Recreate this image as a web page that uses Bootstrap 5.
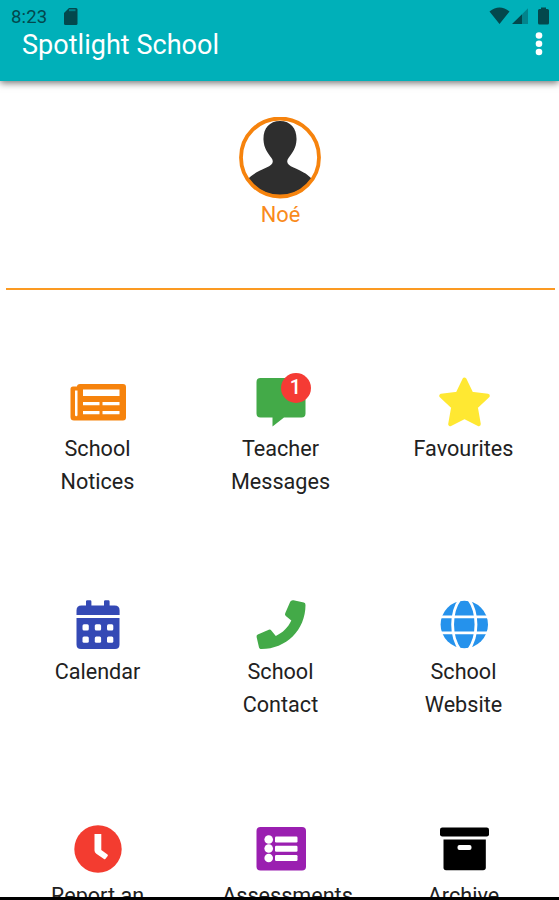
<!DOCTYPE html>
<html lang="en">
<head>
<meta charset="utf-8">
<meta name="viewport" content="width=device-width, initial-scale=1">
<title>Spotlight School</title>
<link href="https://cdn.jsdelivr.net/npm/bootstrap@5.3.0/dist/css/bootstrap.min.css" rel="stylesheet">
<style>
body{font-family:Roboto,"Liberation Sans",sans-serif;color:#212121;height:900px}
.screen{height:900px;border-bottom:3px solid #000}
.app-header{height:81px;background:#00b0b9;box-shadow:0 2px 7px rgba(0,0,0,.55);padding:7px 8px 0 11px;flex:none;z-index:1}
.status-line{height:20px;color:#03484d;font-size:18.5px;line-height:20px;letter-spacing:.2px}
.app-title{font-size:27px;line-height:36px;color:#fff;padding-left:11px;letter-spacing:.03px}
.profile{height:209px;margin:0 4px 0 6px;border-bottom:2px solid #fb9a22;padding-top:36px;flex:none}
.profile svg{margin-right:2px}
.profile-name{color:#f98a1c;font-size:21.8px;line-height:32px}
.tiles{margin:82px 5px 0;flex:none}
.tile{height:223.3px;font-size:21.6px;line-height:32.5px}
.tile svg{display:block;margin-bottom:1px}
.tile-label{padding-left:2px}
.tile-icon{width:60px}
.count-dot{left:31px;top:1px;width:30px;height:30px;background:#f53b34;font-size:20px;line-height:29px}
</style>
<script src="https://cdn.jsdelivr.net/npm/bootstrap@5.3.0/dist/js/bootstrap.bundle.min.js"></script>
</head>
<body class="bg-white overflow-hidden">
<div class="screen d-flex flex-column overflow-hidden">
  <header class="app-header">
    <div class="status-line d-flex justify-content-between">
      <div class="d-flex">
        <span>8:23</span>
        <svg class="ms-3" width="18" height="20" viewBox="0 0 18 20"><path fill="#03484d" d="M6 1h7q1.500 0 1.500 1.500v14q0 1.500-1.500 1.500H2.500q-1.500 0-1.500-1.500V6z"/><path stroke="#00828a" stroke-width="2" d="M6 3.200h6.500"/></svg>
      </div>
      <svg width="62" height="20" viewBox="489 7 62 20"><path fill="#03484d" d="M489.500 11.500q10-8 20 0L499.500 24zM512 24l10-9.800V24zM538 10.500q0-1.500 1.500-1.500h1.500V7.500h5V9h1.500q1.500 0 1.500 1.500V23q0 1.500-1.500 1.500h-8q-1.500 0-1.500-1.500z"/><path fill="#02848c" d="M522 14.200l6-6V24h-6z"/></svg>
    </div>
    <div class="d-flex justify-content-between">
      <h1 class="app-title fw-normal mb-0">Spotlight School</h1>
      <svg width="24" height="34" viewBox="527 27 24 34" fill="#fff"><circle cx="539" cy="35.500" r="3.300"/><circle cx="539" cy="43.800" r="3.300"/><circle cx="539" cy="52" r="3.300"/></svg>
    </div>
  </header>

  <section class="profile d-flex flex-column align-items-center">
    <svg width="82" height="82" viewBox="239 117 82 82"><defs><clipPath id="face"><circle cx="280" cy="157.500" r="38"/></clipPath></defs><path clip-path="url(#face)" fill="#2e2e2e" d="M280 121c11 0 17 8 16.500 19-.4 8-4 12.500-8 18-3 4.500-.5 7 5 9.500 8 3.500 13 6 17.500 10.500V200h-62v-22c4.500-4.500 9.500-7 17.500-10.500 5.500-2.500 8-5 5-9.500-4-5.500-7.600-10-8-18C263 129 269 121 280 121z"/><circle cx="280" cy="157.500" r="39" fill="none" stroke="#f6830d" stroke-width="3.800"/></svg>
    <div class="profile-name">Noé</div>
  </section>

  <main class="tiles row g-0 text-center">
    <div class="tile col-4 d-flex flex-column align-items-center">
      <svg width="60" height="60" viewBox="67 372 60 60"><path fill="#f6830d" d="M80 384h43q3 0 3 3v30.500q0 3-3 3H74q-3.500 0-3.500-3.500v-28q0-2.500 2.500-2.500h4q0-2.500 3-2.500z"/><path fill="#fff" d="M83 389.500h36.500v6.500H83zM83 402h16.500v3.300H83zM102.500 402h17v3.300h-17zM83 411h16.500v3.300H83zM102.500 411h17v3.300h-17zM75 390.500h2.500V415q0 1.200-1.200 1.200T75 415z"/></svg>
      <div class="tile-label">School<br>Notices</div>
    </div>
    <div class="tile col-4 d-flex flex-column align-items-center">
      <div class="tile-icon position-relative">
        <svg width="60" height="60" viewBox="250 372 60 60"><path fill="#43aa48" d="M260.500 378h41q4 0 4 4v31.500q0 4-4 4H284l-11.500 9v-9h-12q-4 0-4-4V382q0-4 4-4z"/></svg>
        <span class="count-dot position-absolute rounded-circle text-white fw-medium">1</span>
      </div>
      <div class="tile-label">Teacher<br>Messages</div>
    </div>
    <div class="tile col-4 d-flex flex-column align-items-center">
      <svg width="60" height="60" viewBox="433 372 60 60"><path fill="#ffe832" stroke="#ffe832" stroke-width="4" stroke-linejoin="round" d="M464.500 379.500l7 14.300 16.300 2-12 11.200 3 17.200-14.300-7.200-14.300 7.200 3-17.200-12-11.200 16.300-2z"/></svg>
      <div class="tile-label">Favourites</div>
    </div>

    <div class="tile col-4 d-flex flex-column align-items-center">
      <svg width="60" height="60" viewBox="67 595.500 60 60"><path fill="#3449b5" d="M86 606v-4q0-1.200 1.200-1.200h3q1.200 0 1.200 1.200v4H104v-4q0-1.200 1.200-1.200h3.200q1.200 0 1.200 1.200v4h5q5 0 5 5v4.500H76.500V611q0-5 5-5zM76.500 618.500h43V645q0 4.500-4.500 4.500H81q-4.500 0-4.500-4.500z"/><g fill="#fff"><rect x="82.500" y="624.700" width="6.300" height="6.300" rx="1.500"/><rect x="94.800" y="624.700" width="6.300" height="6.300" rx="1.500"/><rect x="107" y="624.700" width="6.300" height="6.300" rx="1.500"/><rect x="82.500" y="637" width="6.300" height="6.300" rx="1.500"/><rect x="94.800" y="637" width="6.300" height="6.300" rx="1.500"/><rect x="107" y="637" width="6.300" height="6.300" rx="1.500"/></g></svg>
      <div class="tile-label">Calendar</div>
    </div>
    <div class="tile col-4 d-flex flex-column align-items-center">
      <svg width="60" height="60" viewBox="250 595.500 60 60"><path fill="#43aa48" d="M293.500 600.700l10.300 2.400q1.700.4 1.700 2.300c0 25-19.500 44-44 44-1.700 0-2.200-.5-2.600-2l-2.300-10q-.4-1.800 1.200-2.500l11-4.600q1.500-.6 2.500.7l4.500 5.400c7.300-3.500 12.200-8.500 15.500-15.500l-5.500-4.500q-1.300-1-.6-2.600l5-11.500q.9-2 3.300-1.600z"/></svg>
      <div class="tile-label">School<br>Contact</div>
    </div>
    <div class="tile col-4 d-flex flex-column align-items-center">
      <svg width="60" height="60" viewBox="433 595.500 60 60"><circle cx="464.300" cy="625" r="23.700" fill="#2592ec"/><path fill="none" stroke="#fff" stroke-width="2.800" d="M439 617.300h51M439 633.300h51M460.500 599c-10.500 14-10.500 38 0 52M468.100 599c10.500 14 10.500 38 0 52"/></svg>
      <div class="tile-label">School<br>Website</div>
    </div>

    <div class="tile col-4 d-flex flex-column align-items-center">
      <svg width="60" height="60" viewBox="67 818.500 60 60"><circle cx="98" cy="848.500" r="23.700" fill="#f33c30"/><path fill="#fff" d="M94.500 833.500h6.800v16l6.200 4.600q.7.600.2 1.300l-2.400 3q-.6.700-1.300.2l-7.700-5.400q-1.800-1.200-1.800-3.200z"/></svg>
      <div class="tile-label">Report an</div>
    </div>
    <div class="tile col-4 d-flex flex-column align-items-center">
      <svg width="60" height="60" viewBox="250 818.500 60 60"><rect x="256.500" y="826.500" width="49.500" height="43.500" rx="4" fill="#9a1fb0"/><g fill="#fff"><circle cx="268.700" cy="839" r="4.300"/><circle cx="268.700" cy="848" r="4.300"/><circle cx="268.700" cy="857.500" r="4.300"/><rect x="275" y="836" width="22.500" height="6" rx="1.200"/><rect x="275" y="845.300" width="22.500" height="6" rx="1.200"/><rect x="275" y="854.500" width="22.500" height="6" rx="1.200"/></g></svg>
      <div class="tile-label ps-3">Assessments</div>
    </div>
    <div class="tile col-4 d-flex flex-column align-items-center">
      <svg width="60" height="60" viewBox="433 818.500 60 60"><rect x="440" y="827" width="49" height="9" rx="2.300"/><path d="M443.500 839h42.300v28q0 2.700-2.700 2.700h-37q-2.600 0-2.600-2.700z"/><rect x="457.500" y="844.500" width="14" height="5" rx="2" fill="#fff"/></svg>
      <div class="tile-label">Archive</div>
    </div>
  </main>
</div>
</body>
</html>
